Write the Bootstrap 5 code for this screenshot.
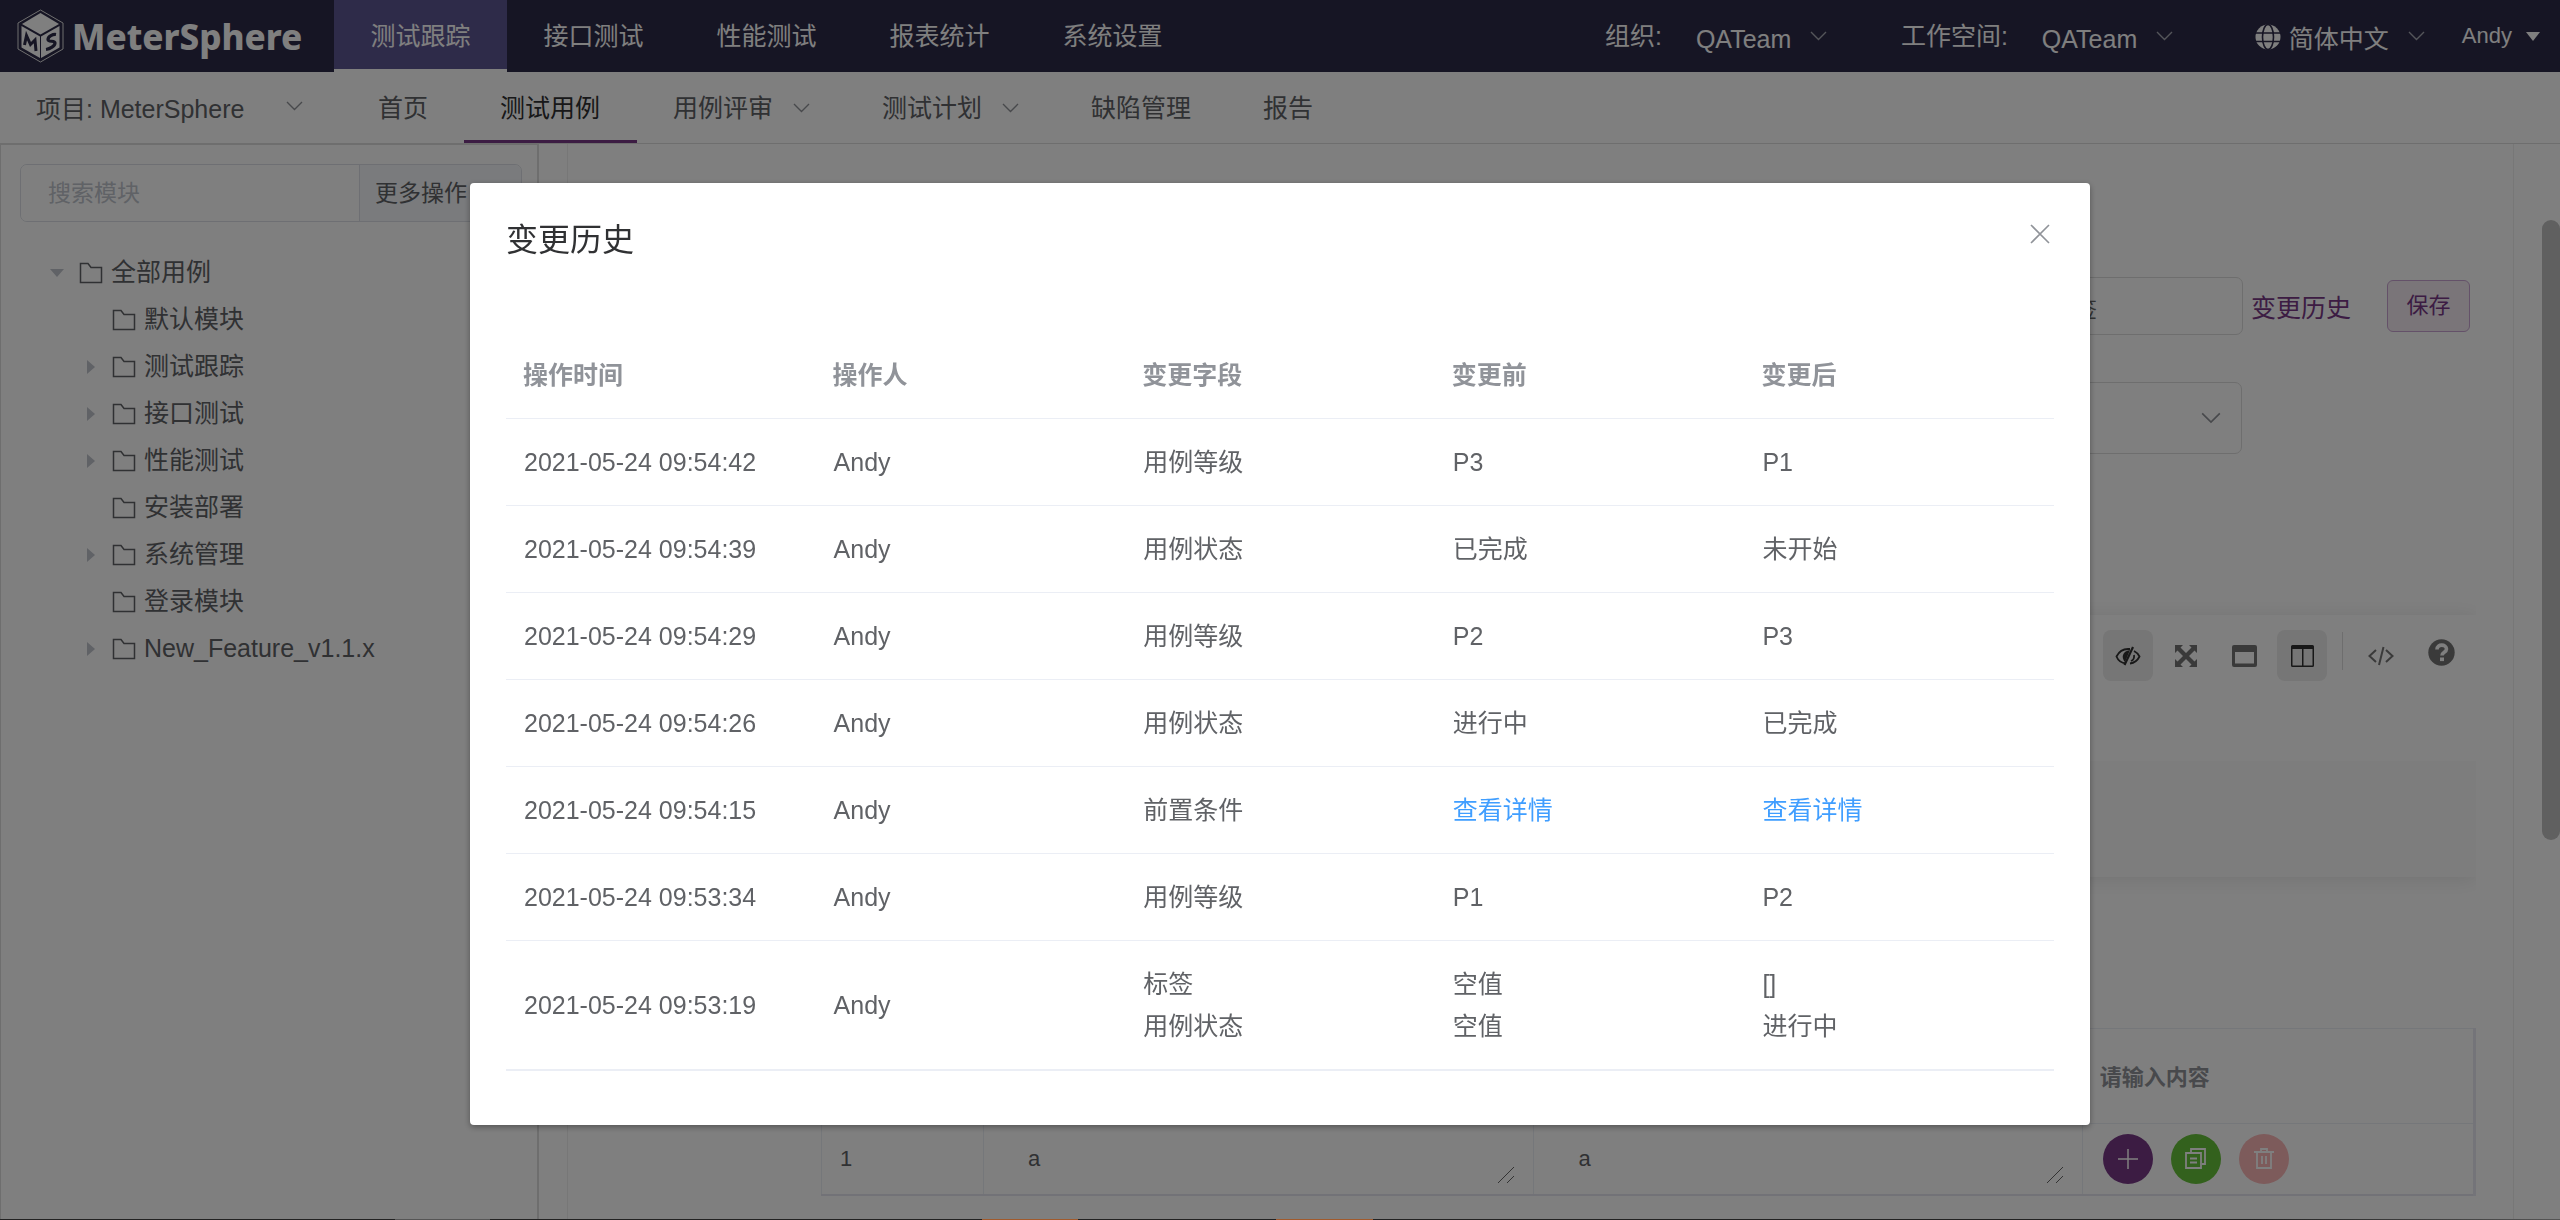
<!DOCTYPE html>
<html lang="zh-CN">
<head>
<meta charset="utf-8">
<meta name="viewport" content="width=device-width, initial-scale=1">
<title>MeterSphere</title>
<link href="https://cdn.jsdelivr.net/npm/bootstrap@5.3.0/dist/css/bootstrap.min.css" rel="stylesheet">
<style>
:root{--ms:#783887;--ink:#606266;--line:#e6e6e6;--soft:#ebeef5}
body{font-family:"Liberation Sans","Noto Sans CJK SC",sans-serif;font-size:25px;line-height:42px;color:var(--ink);background:#fff}
a{text-decoration:none;color:inherit}
.app{height:100vh;overflow:hidden}
/* top bar */
.topbar{background:#2c2a48;color:#fff;height:72px;flex:none}
.brand{width:334px;padding-left:17px;gap:8px;font:800 35px "Noto Sans",sans-serif;color:#fff}
.topmenu a{min-width:173px;height:72px;display:flex;align-items:center;justify-content:center;color:#fff}
.topmenu a.active{background:#5d5693;border-bottom:3px solid #fff;padding-top:3px}
.tools{padding-right:20px}
.team-gap{margin-left:34px}
.ws-label{margin-left:74px}
.lang-label{margin:2px 8px 0 82px}
.user{font-size:22px;background:none;border:0;color:#fff;padding:0;margin-left:37px;gap:14px}
.pick{appearance:none;border:0;background:transparent no-repeat right center/17px 10px;color:inherit;font:inherit;padding:3px 0 0;height:42px;outline:0}
.pick option{color:#606266}
.on-dark{background-image:url("data:image/svg+xml,%3Csvg xmlns='http://www.w3.org/2000/svg' viewBox='0 0 17 10'%3E%3Cpath d='M1 1l7.5 7.5L16 1' fill='none' stroke='%23a9abb5' stroke-width='1.4'/%3E%3C/svg%3E")}
.on-light{background-image:url("data:image/svg+xml,%3Csvg xmlns='http://www.w3.org/2000/svg' viewBox='0 0 17 10'%3E%3Cpath d='M1 1l7.5 7.5L16 1' fill='none' stroke='%23909399' stroke-width='1.4'/%3E%3C/svg%3E")}
.team{width:131px}
.lang{width:136px}
/* second bar */
.subbar{height:72px;border-bottom:1px solid #dcdcdc;flex:none}
.project{width:267px}
.project-box{width:342px;padding-left:36px}
.submenu a{height:71px;padding:1px 36px 0;display:flex;align-items:center;gap:20px}
.submenu a.active{color:#303133;border-bottom:3px solid var(--ms);padding-top:4px;min-width:173px}
/* sidebar */
.side{width:539px;flex:none;border:1px solid #dcdcdc;border-width:1px 2px 0 1px;padding:19px 15px 0 19px}
.find{height:58px;border:1px solid #dcdfe6;border-radius:7px;overflow:hidden;font-size:23px}
.find input{border:0;width:338px;padding:0 27px;color:var(--ink);outline:0}
.find input::placeholder{color:#c0c4cc}
.find button{flex:1;border:0;border-left:1px solid #dcdfe6;background:#f5f7fa;color:var(--ink);text-align:left;padding:0 15px}
.tree{padding:27px 0 0 27px;line-height:47px}
.tree div{display:flex;align-items:center;height:47px}
.tree .kid{padding-left:33px}
.tree .twist{width:20px;margin-right:12px}
.tree .fold{width:24px;height:22px;margin-right:8px}
/* work area */
.work{margin:0 46px 0 28px;flex:1;min-width:0;border:1px solid #efefef;border-width:0 1px;padding:133px 37px 0 253px}
.box{border:1px solid #dcdcdc;border-radius:7px;background-color:#fff;color:#666;font-size:22px;outline:0}
.tag-in{width:318px;height:58px;padding:2px 17px 0}
.owner{width:318px;height:72px;margin-top:47px;margin-right:234px;background-position:right 20px center;background-size:20px 12px}
.history-link{color:var(--ms);width:136px;margin-left:8px;padding-top:4px}
.save{width:83px;height:52px;font-size:22px;line-height:22px;padding:0;background:#f5ebf3;border:1px solid #c9a3d2;border-radius:6px;color:var(--ms);margin-right:6px}
.editor-wrap{margin-top:141px;padding:20px 0;overflow:hidden}
.editor{box-shadow:0 2px 20px rgba(0,0,0,.1);background:#fff}
.bar{height:146px;padding:15px 10px 0;gap:8px}
.bar button{width:50px;height:51px;border:0;border-radius:8px;background:none;color:#757575;padding:0;display:flex;align-items:center;justify-content:center}
.bar button.on{background:#ececec;color:#303030}
.bar .sep{width:1px;height:38px;margin:2px 5px 0 7px;background:#dcdcdc}
.bar .help{margin:-3px 0 0 2px}
.canvas{height:116px;background:#fbfbfb}
.steps{width:100%;margin-top:131px;table-layout:fixed;border-collapse:collapse;font-size:22px;line-height:30px;border:1px solid var(--soft);border-right:3px solid #e9e9f2;border-bottom:2px solid #e4e4ee}
.steps th{height:95px;color:#909399;padding:4px 17px 0;border-bottom:1px solid var(--soft)}
.steps td{height:71px;border-right:1px solid var(--soft);padding:0 18px;position:relative}
.steps textarea{border:0;resize:none;width:100%;height:30px;padding:0 26px;display:block;color:inherit;line-height:30px;outline:0;overflow:hidden;background:none}
.steps .grip{position:absolute;right:18px;bottom:10px}
.discs{gap:18px;padding-left:2px}
.disc{width:50px;height:50px;border-radius:50%;border:0;padding:0;color:#fff;display:flex;align-items:center;justify-content:center}
.c-add{background:var(--ms)}.c-copy{background:#67c23a}.c-del{background:#fab6b6}
.rail{position:fixed;right:0;top:220px;width:18px;height:620px;border-radius:9px;background:#c1c1c1}
.dock{height:1px;z-index:2000;background:linear-gradient(90deg,#222 395px,#555 395px 490px,#222 490px 982px,#a05a2c 982px 1078px,#222 1078px 1276px,#a05a2c 1276px 1373px,#222 1373px 2250px,#555)}
/* dialog */
.modal-dialog.history{max-width:1620px;margin:15vh auto 0}
.history .modal-content{border:0;border-radius:4px;box-shadow:0 2px 6px rgba(0,0,0,.35);padding:0 36px 54px;color:var(--ink)}
.history .modal-header{border:0;padding:34px 1px 0 0;height:150px;align-items:flex-start}
.history h1{font-size:32px;line-height:46px;font-weight:400;color:#303133;margin:0}
.history .x{border:0;background:none;padding:7px 3px;line-height:0;color:#909399}
.log{width:100%;table-layout:fixed;border-bottom:2px solid var(--soft)}
.log th{color:#909399;height:85px;padding:0 17px;border-bottom:1px solid var(--soft)}
.log td{height:87px;padding:0 18px;border-bottom:1px solid var(--soft)}
.log tr:last-child td{height:130px;border:0}
.log a{color:#409eff}
</style>
</head>
<body>
<svg class="d-none">
  <symbol id="dir" viewBox="0 0 24 22"><path d="M1.5 20.5V1.5H9l3 4h10.500v15z" fill="none" stroke="currentColor" stroke-width="1.500"/></symbol>
  <symbol id="down" viewBox="0 0 17 10"><path d="M1 1l7.500 7.500L16 1" fill="none" stroke="#909399" stroke-width="1.400"/></symbol>
  <symbol id="tri" viewBox="0 0 20 20"><path d="M7 3l8 7-8 7z" fill="#c0c4cc"/></symbol>
</svg>
<div class="app d-flex flex-column">
  <header class="topbar d-flex align-items-center">
    <a class="brand d-flex align-items-center" href="#">
      <svg width="47" height="54" viewBox="0 0 47 54"><path d="M23.500 1L46 14v26L23.500 53 1 40V14z" fill="none" stroke="#ddd" stroke-width="1"/><path d="M23.500 4L42 15 23.500 25.500 5 15z" fill="#fff"/><path d="M4.500 17L23 27.500V49L4.500 38.500z" fill="#fff"/><path d="M42.500 17L24 27.500V49l18.500-10.500z" fill="#fff"/><path d="M7.500 36l2-9.500 4 9 4.500-4.500 1 11" fill="none" stroke="#2c2a48" stroke-width="3"/><path d="M39 25.500c-3-.5-8 2-8 5s7 .500 7 3.500-5 6-9 6.500" fill="none" stroke="#2c2a48" stroke-width="3.200"/></svg>
      <span>MeterSphere</span>
    </a>
    <nav class="topmenu d-flex"><a class="active" href="#">测试跟踪</a><a href="#">接口测试</a><a href="#">性能测试</a><a href="#">报表统计</a><a href="#">系统设置</a></nav>
    <div class="tools ms-auto d-flex align-items-center">
      <label for="org">组织:</label>
      <select id="org" class="pick on-dark team team-gap"><option>QATeam</option></select>
      <label for="ws" class="ws-label">工作空间:</label>
      <select id="ws" class="pick on-dark team team-gap"><option>QATeam</option></select>
      <label for="lang" class="lang-label d-flex" aria-label="语言"><svg width="26" height="26" viewBox="0 0 26 26"><circle cx="13" cy="13" r="12.500" fill="#fff"/><g fill="none" stroke="#2c2a48" stroke-width="1.600"><ellipse cx="13" cy="13" rx="5.500" ry="12.500"/><path d="M0 9h26M0 17.500h26"/></g></svg></label>
      <select id="lang" class="pick on-dark lang"><option>简体中文</option></select>
      <button class="user d-flex align-items-center">Andy<svg width="14" height="9" viewBox="0 0 14 9"><path d="M0 0h14L7 9z" fill="#fff"/></svg></button>
    </div>
  </header>
  <div class="subbar d-flex align-items-center">
    <div class="project-box"><select class="pick on-light project" aria-label="项目"><option>项目: MeterSphere</option></select></div>
    <nav class="submenu d-flex"><a href="#">首页</a><a class="active" href="#">测试用例</a><a href="#">用例评审<svg width="17" height="10"><use href="#down"/></svg></a><a href="#">测试计划<svg width="17" height="10"><use href="#down"/></svg></a><a href="#">缺陷管理</a><a href="#">报告</a></nav>
  </div>
  <div class="d-flex flex-grow-1 overflow-hidden">
    <aside class="side">
      <div class="find d-flex"><input type="text" placeholder="搜索模块" aria-label="搜索模块"><button>更多操作</button></div>
      <div class="tree">
        <div><svg class="twist" height="20" viewBox="0 0 20 20"><path d="M3 6h14l-7 8z" fill="#c0c4cc"/></svg><svg class="fold"><use href="#dir"/></svg>全部用例</div>
        <div class="kid"><span class="twist"></span><svg class="fold"><use href="#dir"/></svg>默认模块</div>
        <div class="kid"><svg class="twist" height="20"><use href="#tri"/></svg><svg class="fold"><use href="#dir"/></svg>测试跟踪</div>
        <div class="kid"><svg class="twist" height="20"><use href="#tri"/></svg><svg class="fold"><use href="#dir"/></svg>接口测试</div>
        <div class="kid"><svg class="twist" height="20"><use href="#tri"/></svg><svg class="fold"><use href="#dir"/></svg>性能测试</div>
        <div class="kid"><span class="twist"></span><svg class="fold"><use href="#dir"/></svg>安装部署</div>
        <div class="kid"><svg class="twist" height="20"><use href="#tri"/></svg><svg class="fold"><use href="#dir"/></svg>系统管理</div>
        <div class="kid"><span class="twist"></span><svg class="fold"><use href="#dir"/></svg>登录模块</div>
        <div class="kid"><svg class="twist" height="20"><use href="#tri"/></svg><svg class="fold"><use href="#dir"/></svg>New_Feature_v1.1.x</div>
      </div>
    </aside>
    <main class="work">
      <div class="d-flex justify-content-end align-items-center">
        <input class="box tag-in" type="text" value="回车可添加标签" aria-label="标签">
        <a class="history-link" href="#">变更历史</a>
        <button class="btn save">保存</button>
      </div>
      <div class="d-flex justify-content-end"><select class="pick on-light box owner" aria-label="责任人"><option></option></select></div>
      <div class="editor-wrap"><div class="editor">
        <div class="bar d-flex justify-content-end">
          <button class="on" aria-label="预览"><svg width="26" height="20" viewBox="0 0 26 20"><g fill="none" stroke="currentColor" stroke-width="1.800"><path d="M11 17.500C5.500 17 2.500 13 1.500 10.500 4 5.500 8.500 3 13 3h2"/><path d="M19 5c3 1.500 4.500 3.500 5.500 5.500-2 4-5.500 6.500-9.500 7"/><path d="M19 9c.5 3-.5 5-3 6"/></g><path d="M15 4l-5 12C6 12 7 5 15 4z" fill="currentColor"/><path d="M18 1L9.500 19" stroke="currentColor" stroke-width="2.200"/></svg></button>
          <button aria-label="全屏"><svg width="22" height="22" viewBox="0 0 22 22" fill="currentColor"><path d="M0 0h8L5.500 2.500 11 8l5.500-5.500L14 0h8v8l-2.500-2.500L14 11l5.500 5.500L22 14v8h-8l2.500-2.500L11 14l-5.500 5.500L8 22H0v-8l2.500 2.500L8 11 2.500 5.500 0 8z"/></svg></button>
          <button aria-label="单栏"><svg width="25" height="22" viewBox="0 0 25 22"><path fill="currentColor" fill-rule="evenodd" d="M2 0h21a2 2 0 0 1 2 2v18a2 2 0 0 1-2 2H2a2 2 0 0 1-2-2V2a2 2 0 0 1 2-2zm1 7v11.500h19V7z"/></svg></button>
          <button class="on" aria-label="双栏"><svg width="23" height="22" viewBox="0 0 23 22"><path fill="currentColor" fill-rule="evenodd" d="M1.500 0h20A1.500 1.500 0 0 1 23 1.500v19a1.500 1.500 0 0 1-1.500 1.500h-20A1.500 1.500 0 0 1 0 20.500v-19A1.500 1.500 0 0 1 1.500 0zM1.500 4v16.500H11V4zM12.500 4v16.500h9V4z"/></svg></button>
          <span class="sep"></span>
          <button aria-label="源码"><svg width="26" height="20" viewBox="0 0 26 20" fill="none" stroke="currentColor" stroke-width="2"><path d="M8 4l-6.500 6L8 16M18 4l6.500 6-6.500 6M15.500 1l-4.500 18"/></svg></button>
          <button class="help" aria-label="帮助"><svg width="27" height="27" viewBox="0 0 27 27"><circle cx="13.500" cy="13.500" r="13.200" fill="currentColor"/><path d="M9 10.500c0-6 9.500-5.500 9.500-.5 0 3.500-4.500 3-4.500 6.500" fill="none" stroke="#fff" stroke-width="3.600"/><rect x="12" y="18.500" width="4" height="3.600" fill="#fff"/></svg></button>
        </div>
        <div class="canvas"></div>
      </div></div>
      <table class="steps">
        <colgroup><col style="width:9.8%"><col style="width:33.300%"><col style="width:33.200%"><col></colgroup>
        <thead><tr><th></th><th></th><th></th><th>请输入内容</th></tr></thead>
        <tbody><tr>
          <td>1</td>
          <td><textarea aria-label="步骤">a</textarea><svg class="grip" width="18" height="18"><path d="M1 17L17 1M10 17l7-7" stroke="#666" fill="none"/></svg></td>
          <td><textarea aria-label="预期结果">a</textarea><svg class="grip" width="18" height="18"><path d="M1 17L17 1M10 17l7-7" stroke="#666" fill="none"/></svg></td>
          <td><div class="d-flex discs">
            <button class="disc c-add" aria-label="添加"><svg width="20" height="20"><path d="M10 0v20M0 10h20" stroke="#fff" stroke-width="1.500"/></svg></button>
            <button class="disc c-copy" aria-label="复制"><svg width="22" height="22" fill="none" stroke="#fff" stroke-width="1.800"><path d="M1 5h15v15H1zM6 4V1h14v15h-3M5 10.500h7M5 14.500h7"/></svg></button>
            <button class="disc c-del" aria-label="删除" disabled><svg width="20" height="22" fill="none" stroke="#fff" stroke-width="1.800"><path d="M0 4h20M3 4v16h14V4M7 4V1h6v3M8 8v8M12 8v8"/></svg></button>
          </div></td>
        </tr></tbody>
      </table>
    </main>
  </div>
  <div class="rail"></div>
</div>
<div class="modal-backdrop show"></div>
<div class="modal d-block" tabindex="-1" role="dialog" aria-labelledby="dlg">
  <div class="modal-dialog history"><div class="modal-content">
    <div class="modal-header"><h1 id="dlg">变更历史</h1><button class="x" aria-label="关闭"><svg width="20" height="20"><path d="M1 1l18 18M19 1L1 19" stroke="currentColor" stroke-width="1.600"/></svg></button></div>
    <table class="log">
      <thead><tr><th>操作时间</th><th>操作人</th><th>变更字段</th><th>变更前</th><th>变更后</th></tr></thead>
      <tbody>
        <tr><td>2021-05-24 09:54:42</td><td>Andy</td><td>用例等级</td><td>P3</td><td>P1</td></tr>
        <tr><td>2021-05-24 09:54:39</td><td>Andy</td><td>用例状态</td><td>已完成</td><td>未开始</td></tr>
        <tr><td>2021-05-24 09:54:29</td><td>Andy</td><td>用例等级</td><td>P2</td><td>P3</td></tr>
        <tr><td>2021-05-24 09:54:26</td><td>Andy</td><td>用例状态</td><td>进行中</td><td>已完成</td></tr>
        <tr><td>2021-05-24 09:54:15</td><td>Andy</td><td>前置条件</td><td><a href="#">查看详情</a></td><td><a href="#">查看详情</a></td></tr>
        <tr><td>2021-05-24 09:53:34</td><td>Andy</td><td>用例等级</td><td>P1</td><td>P2</td></tr>
        <tr><td>2021-05-24 09:53:19</td><td>Andy</td><td>标签<br>用例状态</td><td>空值<br>空值</td><td>[]<br>进行中</td></tr>
      </tbody>
    </table>
  </div></div>
</div>
<div class="dock fixed-bottom"></div>
<script src="https://cdn.jsdelivr.net/npm/bootstrap@5.3.0/dist/js/bootstrap.bundle.min.js"></script>
</body>
</html>
